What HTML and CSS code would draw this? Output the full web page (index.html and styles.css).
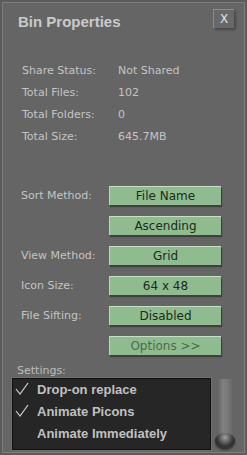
FILE: index.html
```html
<!DOCTYPE html>
<html lang="en">
  <head>
    <meta charset="UTF-8" />
    <meta name="viewport" content="width=device-width, initial-scale=1.0" />
    <title>Bin Properties</title>
    <link rel="stylesheet" href="styles.css">
  </head>
  <body>
    <div class="panel">
      <!-- 제목 -->
      <div class="panel-header">
        <h1>Bin Properties</h1>
        <button class="close-btn">X</button>
      </div>

      <!-- 정보 -->
      <div class="info">
        <span class="info-label">Share Status:</span><span class="info-value">Not Shared</span>
        <span class="info-label">Total Files:</span><span class="info-value">102</span>
        <span class="info-label">Total Folders:</span><span class="info-value">0</span>
        <span class="info-label">Total Size:</span><span class="info-value">645.7MB</span>
      </div>

      <!-- 옵션 버튼 -->
      <div class="controls">
        <span class="ctrl-label">Sort Method:</span><button class="green-btn">File Name</button>
        <span class="ctrl-label"></span><button class="green-btn">Ascending</button>
        <span class="ctrl-label">View Method:</span><button class="green-btn">Grid</button>
        <span class="ctrl-label">Icon Size:</span><button class="green-btn">64 x 48</button>
        <span class="ctrl-label">File Sifting:</span><button class="green-btn">Disabled</button>
        <span class="ctrl-label"></span><button class="green-btn dim">Options &gt;&gt;</button>
      </div>

      <!-- 설정 -->
      <div class="settings-label">Settings:</div>
      <div class="settings">
        <ul class="settings-list">
          <li>
            <svg class="check" viewBox="0 0 14 14"><polyline points="1,7 5,12 13,1" /></svg>
            Drop-on replace
          </li>
          <li>
            <svg class="check" viewBox="0 0 14 14"><polyline points="1,7 5,12 13,1" /></svg>
            Animate Picons
          </li>
          <li>Animate Immediately</li>
        </ul>
        <div class="scroll">
          <div class="scroll-track"></div>
          <div class="scroll-knob"></div>
        </div>
      </div>
    </div>
  </body>
</html>
```

FILE: styles.css
```css
:root {
  --panel: #656565;
  --text: #c4c4c4;
  --green: #8fbc8f;
  --green-text: #1c2a1c;
}

* {
  margin: 0;
  padding: 0;
  box-sizing: border-box;
  font-family: "DejaVu Sans", Verdana, sans-serif;
}

body {
  background: #5c5c5c;
  width: 247px;
  height: 455px;
  overflow: hidden;
  padding: 2px 2px 2px 2px;
}

.panel {
  height: 451px;
  background: var(--panel);
  border: 1px solid #7e7e7e;
  padding: 6px 9px 0 9px;
}

/* 제목 */
.panel-header {
  display: flex;
  justify-content: space-between;
  align-items: flex-start;
  height: 50px;
}

.panel-header h1 {
  font-family: "Liberation Sans", Arial, sans-serif;
  font-size: 15px;
  font-weight: bold;
  color: #cacaca;
  margin: 4px 0 0 6px;
}

.close-btn {
  width: 21px;
  height: 19px;
  background: #686868;
  border: none;
  border-top: 1px solid #909090;
  border-left: 1px solid #8a8a8a;
  box-shadow: 2px 2px 2px #4a4a4a;
  color: #e0e0e0;
  font-size: 12px;
  line-height: 17px;
  margin-right: 1px;
}

/* 정보 */
.info {
  display: grid;
  grid-template-columns: 96px 1fr;
  grid-auto-rows: 22px;
  align-items: center;
  font-size: 11px;
  color: var(--text);
  padding-left: 10px;
}

/* 옵션 버튼 */
.controls {
  display: grid;
  grid-template-columns: 88px 112px;
  grid-auto-rows: 19px;
  row-gap: 11px;
  align-items: center;
  margin-top: 39px;
  padding-left: 9px;
}

.ctrl-label {
  font-size: 11px;
  color: var(--text);
}

.green-btn {
  height: 19px;
  background: var(--green);
  border: none;
  border-top: 1px solid #c5e0c5;
  border-left: 1px solid #b8d6b8;
  box-shadow: 1px 2px 1px #404040;
  color: var(--green-text);
  font-size: 12px;
  line-height: 17px;
}

.green-btn.dim {
  color: #4c6a4c;
}

/* 설정 */
.settings-label {
  font-size: 11px;
  color: #bcbcbc;
  margin: 9px 0 0 5px;
  line-height: 13px;
}

.settings {
  display: flex;
  align-items: flex-start;
  margin-top: 1px;
}

.settings-list {
  list-style: none;
  width: 200px;
  height: 72px;
  background: #262626;
  border: 1px solid #101010;
  box-shadow: 0 0 0 1px #707070;
}

.settings-list li {
  position: relative;
  height: 22px;
  line-height: 22px;
  padding-left: 24px;
  font-family: "Liberation Sans", Arial, sans-serif;
  font-size: 13px;
  font-weight: bold;
  color: #c0c0c0;
}

.check {
  position: absolute;
  left: 2px;
  top: 3px;
  width: 14px;
  height: 14px;
  fill: none;
  stroke: #d0d0d0;
  stroke-width: 1.2;
}

.scroll {
  position: relative;
  width: 20px;
  height: 74px;
  margin-left: 4px;
  margin-top: 1px;
}

.scroll-track {
  width: 17px;
  height: 62px;
  margin: 0 auto;
  background: linear-gradient(to right, #606060, #808080 35%, #7a7a7a 60%, #626262);
  border-radius: 3px 3px 0 0;
}

.scroll-knob {
  position: absolute;
  left: 0;
  top: 54px;
  width: 20px;
  height: 15px;
  border-radius: 50%;
  background: radial-gradient(ellipse at 50% 30%, #a0a0a0, #3a3a3a 55%, #111 100%);
  box-shadow: 0 2px 2px #333;
}
```
